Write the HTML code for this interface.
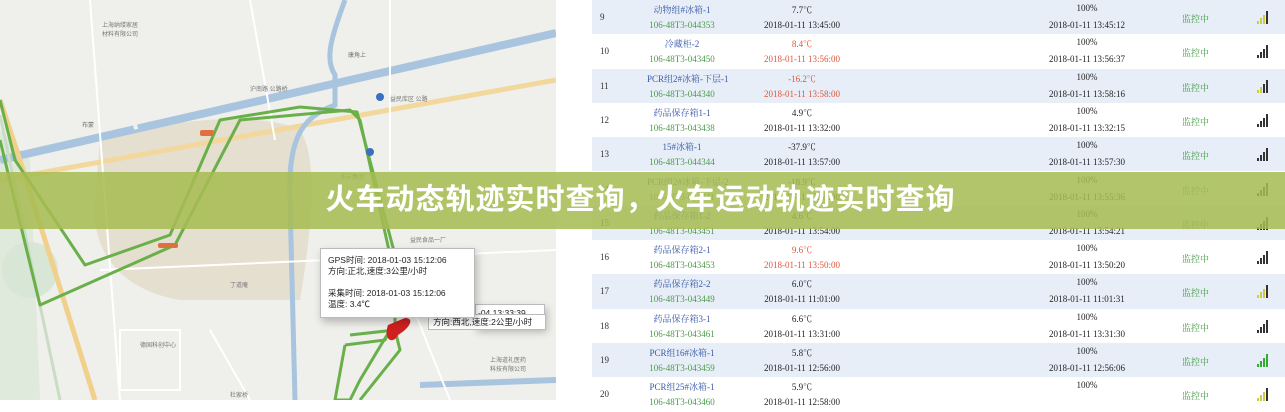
<!DOCTYPE html>
<html><head><meta charset="utf-8"><style>
*{margin:0;padding:0;box-sizing:border-box}
body{width:1285px;height:400px;overflow:hidden;background:#fff;position:relative;font-family:"Liberation Sans","Noto Sans CJK SC",sans-serif}
#map{position:absolute;left:0;top:0;width:556px;height:400px;background:#efefeb}
#tbl{position:absolute;left:592px;top:0;width:693px;height:400px;font-family:"Liberation Serif","Noto Serif CJK SC",serif;font-size:9px}
.r{position:absolute;left:0;width:693px;height:34.3px}
.r.b{background:#e7eef7}
.r span{position:absolute;white-space:nowrap}
.n{left:8px;top:12px;color:#333}
.nm{left:55px;width:70px;text-align:center;top:3px;color:#3a5aa8}
.cd{left:50px;width:80px;text-align:center;top:20px;color:#4c9a4c}
.t{left:160px;width:100px;text-align:center;top:3px;color:#222}
.d{left:160px;width:100px;text-align:center;top:20px;color:#222}
.red{color:#e0553a!important}
.p{left:450px;width:90px;text-align:center;top:3px;color:#222}
.d2{left:445px;width:100px;text-align:center;top:20px;color:#222}
.s{left:590px;top:12px;color:#3d9a3d}
.sig{left:665px;top:10px;width:14px;height:14px}
.sig i{position:absolute;bottom:0;width:2px;background:#333}
#band{position:absolute;left:0;top:172px;width:1285px;height:57px;background:rgba(166,188,82,0.86)}
#title{position:absolute;left:0;top:172px;width:1285px;height:57px;line-height:57px;text-align:center;color:#fff;font-weight:bold;font-size:29px;letter-spacing:1px;font-family:"Liberation Sans","Noto Sans CJK SC",sans-serif;padding-right:4px}
.pop{position:absolute;background:#fff;border:1px solid #bbb;font-size:8.5px;font-family:"Liberation Sans","Noto Sans CJK SC",sans-serif;color:#222;line-height:11px;padding:6px 7px;box-shadow:2px 4px 8px rgba(0,0,0,.25);white-space:nowrap;overflow:hidden}
.ml{position:absolute;font-size:6px;color:#777;white-space:nowrap}
</style></head><body>
<div id="map">
<svg width="556" height="400" viewBox="0 0 556 400">
<path d="M100,140 C160,120 260,110 300,130 C320,160 310,240 300,300 L180,300 C120,290 90,250 95,200 Z" fill="#e5dfd0"/>
<path d="M0,130 L30,160 L40,400 L0,400Z" fill="#dfe9dc"/>
<circle cx="30" cy="270" r="28" fill="#d8e6d6"/>
<path d="M0,160 L556,33" stroke="#a8c4de" stroke-width="8"/>
<path d="M133,125 L137,124" stroke="#efefeb" stroke-width="10"/>
<path d="M0,180 L556,80" stroke="#f2d89c" stroke-width="5"/>
<path d="M0,100 L20,160 L95,400" stroke="#f0d08a" stroke-width="5" fill="none"/>
<path d="M0,115 L60,400" stroke="#c9dcc4" stroke-width="3" fill="none"/>
<path d="M345,0 C330,40 325,60 335,75 L335,105 C300,118 288,140 290,200 L295,400" stroke="#a8c4de" stroke-width="5" fill="none"/>
<path d="M420,385 L556,380" stroke="#a8c4de" stroke-width="6"/>
<g stroke="#fff" stroke-width="2" fill="none">
<path d="M250,0 L275,140"/><path d="M90,0 L120,400"/><path d="M100,270 L556,250"/><path d="M390,0 L390,170"/><path d="M210,330 L250,400"/><path d="M120,330 L180,330 L180,390 L120,390Z"/><path d="M410,300 L450,400"/>
</g>
<g stroke="#6ab04a" stroke-width="3" fill="none" stroke-linejoin="round">
<path d="M0,100 L15,160 L85,265 L170,235 L220,120 L300,107 L357,112 L395,255 L395,330"/>
<path d="M0,140 L40,305 L175,245 L240,120 L350,110 L360,120 L400,300"/>
<path d="M345,345 L385,340 L390,330 L360,380 L350,400 L335,400 L345,345"/>
<path d="M350,335 L395,330 L400,350 L360,400"/>
</g>
<path d="M388,325 C383,340 393,345 398,335 C410,328 415,318 405,318Z" fill="#d02020"/>
<circle cx="380" cy="97" r="4" fill="#3a70c0"/><circle cx="370" cy="152" r="4" fill="#3a70c0"/>
<rect x="200" y="130" width="14" height="6" rx="2" fill="#e07040"/>
<rect x="158" y="243" width="20" height="5" rx="2" fill="#e07040"/>
</svg>
<span class="ml" style="left:102px;top:20px">上海纳缕家居<br>材料有限公司</span>
<span class="ml" style="left:348px;top:50px">康角上</span>
<span class="ml" style="left:250px;top:84px">沪南路 公路桥</span>
<span class="ml" style="left:390px;top:94px">益民库区 公路</span>
<span class="ml" style="left:82px;top:120px">布蒙</span>
<span class="ml" style="left:340px;top:172px">多元集团</span>
<span class="ml" style="left:230px;top:280px">丁道庵</span>
<span class="ml" style="left:140px;top:340px">德国科创中心</span>
<span class="ml" style="left:230px;top:390px">杜家桥</span>
<span class="ml" style="left:410px;top:235px">益民食品一厂</span>
<span class="ml" style="left:490px;top:355px">上海道礼医药<br>科技有限公司</span>
<div class="pop" style="left:475px;top:304px;width:70px;height:24px;padding:3px 2px">-04 13:33:39</div>
<div class="pop" style="left:428px;top:314px;width:118px;height:16px;padding:2px 4px;box-shadow:none">方向:西北,速度:2公里/小时</div>
<div class="pop" style="left:320px;top:248px;width:155px;height:70px">GPS时间: 2018-01-03 15:12:06<br>方向:正北,速度:3公里/小时<br><br>采集时间: 2018-01-03 15:12:06<br>温度: 3.4℃</div>
</div>
<div id="tbl">
<div class="r b" style="top:0"><span class="n">9</span><span class="nm">动物组#冰箱-1</span><span class="cd">106-48T3-044353</span><span class="t">7.7℃</span><span class="d">2018-01-11 13:45:00</span><span class="p">100%</span><span class="d2">2018-01-11 13:45:12</span><span class="s">监控中</span><span class="sig"><i style="left:0;height:3px;background:#cc4"></i><i style="left:3px;height:6px;background:#cc4"></i><i style="left:6px;height:9px;background:#cc4"></i><i style="left:9px;height:13px"></i></span></div>
<div class="r" style="top:34.3px"><span class="n">10</span><span class="nm">冷藏柜-2</span><span class="cd">106-48T3-043450</span><span class="t red">8.4℃</span><span class="d red">2018-01-11 13:56:00</span><span class="p">100%</span><span class="d2">2018-01-11 13:56:37</span><span class="s">监控中</span><span class="sig"><i style="left:0;height:3px"></i><i style="left:3px;height:6px"></i><i style="left:6px;height:9px"></i><i style="left:9px;height:13px"></i></span></div>
<div class="r b" style="top:68.6px"><span class="n">11</span><span class="nm">PCR组2#冰箱-下层-1</span><span class="cd">106-48T3-044340</span><span class="t red">-16.2℃</span><span class="d red">2018-01-11 13:58:00</span><span class="p">100%</span><span class="d2">2018-01-11 13:58:16</span><span class="s">监控中</span><span class="sig"><i style="left:0;height:3px;background:#cc4"></i><i style="left:3px;height:6px;background:#cc4"></i><i style="left:6px;height:9px"></i><i style="left:9px;height:13px"></i></span></div>
<div class="r" style="top:102.9px"><span class="n">12</span><span class="nm">药品保存箱1-1</span><span class="cd">106-48T3-043438</span><span class="t">4.9℃</span><span class="d">2018-01-11 13:32:00</span><span class="p">100%</span><span class="d2">2018-01-11 13:32:15</span><span class="s">监控中</span><span class="sig"><i style="left:0;height:3px"></i><i style="left:3px;height:6px"></i><i style="left:6px;height:9px"></i><i style="left:9px;height:13px"></i></span></div>
<div class="r b" style="top:137.2px"><span class="n">13</span><span class="nm">15#冰箱-1</span><span class="cd">106-48T3-044344</span><span class="t">-37.9℃</span><span class="d">2018-01-11 13:57:00</span><span class="p">100%</span><span class="d2">2018-01-11 13:57:30</span><span class="s">监控中</span><span class="sig"><i style="left:0;height:3px"></i><i style="left:3px;height:6px"></i><i style="left:6px;height:9px"></i><i style="left:9px;height:13px"></i></span></div>
<div class="r" style="top:171.5px"><span class="n">14</span><span class="nm">PCR组2#冰箱-下层-2</span><span class="cd">106-48T3-044341</span><span class="t">-18.9℃</span><span class="d">2018-01-11 13:55:00</span><span class="p">100%</span><span class="d2">2018-01-11 13:55:36</span><span class="s">监控中</span><span class="sig"><i style="left:0;height:3px"></i><i style="left:3px;height:6px"></i><i style="left:6px;height:9px"></i><i style="left:9px;height:13px"></i></span></div>
<div class="r b" style="top:205.8px"><span class="n">15</span><span class="nm">药品保存箱1-2</span><span class="cd">106-48T3-043451</span><span class="t">4.6℃</span><span class="d">2018-01-11 13:54:00</span><span class="p">100%</span><span class="d2">2018-01-11 13:54:21</span><span class="s">监控中</span><span class="sig"><i style="left:0;height:3px"></i><i style="left:3px;height:6px"></i><i style="left:6px;height:9px"></i><i style="left:9px;height:13px"></i></span></div>
<div class="r" style="top:240.1px"><span class="n">16</span><span class="nm">药品保存箱2-1</span><span class="cd">106-48T3-043453</span><span class="t red">9.6℃</span><span class="d red">2018-01-11 13:50:00</span><span class="p">100%</span><span class="d2">2018-01-11 13:50:20</span><span class="s">监控中</span><span class="sig"><i style="left:0;height:3px"></i><i style="left:3px;height:6px"></i><i style="left:6px;height:9px"></i><i style="left:9px;height:13px"></i></span></div>
<div class="r b" style="top:274.4px"><span class="n">17</span><span class="nm">药品保存箱2-2</span><span class="cd">106-48T3-043449</span><span class="t">6.0℃</span><span class="d">2018-01-11 11:01:00</span><span class="p">100%</span><span class="d2">2018-01-11 11:01:31</span><span class="s">监控中</span><span class="sig"><i style="left:0;height:3px;background:#cc4"></i><i style="left:3px;height:6px;background:#cc4"></i><i style="left:6px;height:9px;background:#cc4"></i><i style="left:9px;height:13px"></i></span></div>
<div class="r" style="top:308.7px"><span class="n">18</span><span class="nm">药品保存箱3-1</span><span class="cd">106-48T3-043461</span><span class="t">6.6℃</span><span class="d">2018-01-11 13:31:00</span><span class="p">100%</span><span class="d2">2018-01-11 13:31:30</span><span class="s">监控中</span><span class="sig"><i style="left:0;height:3px"></i><i style="left:3px;height:6px"></i><i style="left:6px;height:9px"></i><i style="left:9px;height:13px"></i></span></div>
<div class="r b" style="top:343px"><span class="n">19</span><span class="nm">PCR组16#冰箱-1</span><span class="cd">106-48T3-043459</span><span class="t">5.8℃</span><span class="d">2018-01-11 12:56:00</span><span class="p">100%</span><span class="d2">2018-01-11 12:56:06</span><span class="s">监控中</span><span class="sig"><i style="left:0;height:3px;background:#3a3"></i><i style="left:3px;height:6px;background:#3a3"></i><i style="left:6px;height:9px;background:#3a3"></i><i style="left:9px;height:13px;background:#3a3"></i></span></div>
<div class="r" style="top:377.3px"><span class="n">20</span><span class="nm">PCR组25#冰箱-1</span><span class="cd">106-48T3-043460</span><span class="t">5.9℃</span><span class="d">2018-01-11 12:58:00</span><span class="p">100%</span><span class="d2"></span><span class="s">监控中</span><span class="sig"><i style="left:0;height:3px;background:#cc4"></i><i style="left:3px;height:6px;background:#cc4"></i><i style="left:6px;height:9px;background:#cc4"></i><i style="left:9px;height:13px"></i></span></div>
</div>
<div id="band"></div>
<div id="title">火车动态轨迹实时查询，火车运动轨迹实时查询</div>
</body></html>
